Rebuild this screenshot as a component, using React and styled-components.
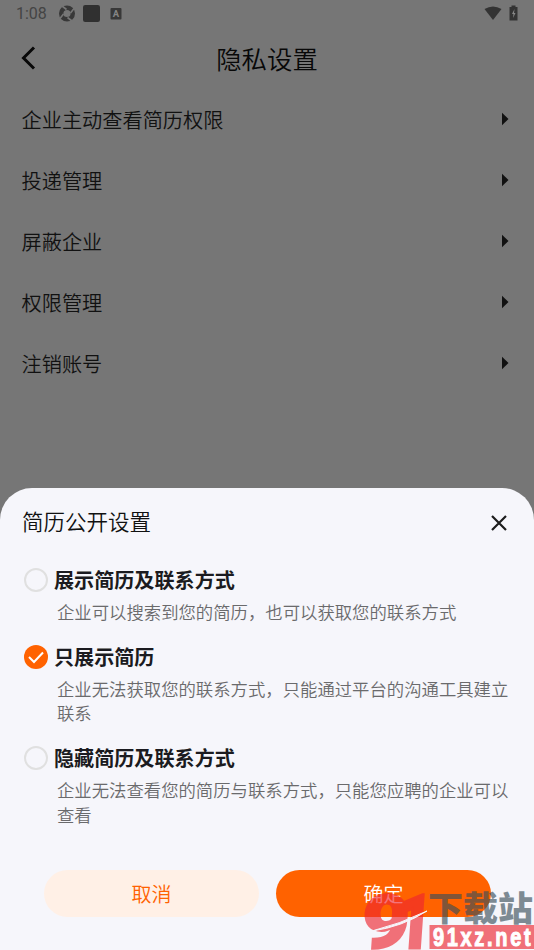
import styled, { createGlobalStyle } from 'styled-components';

const GlobalStyle = createGlobalStyle`
    * {
        box-sizing: border-box;
    }
    body {
        margin: 0;
        font-family: 'Noto Sans CJK SC', sans-serif;
        font-weight: 350;
    }
`;

const Screen = styled.div`
    width: 534px;
    height: 950px;
    display: flex;
    flex-direction: column;
    background: #767676;
    position: relative;
    overflow: hidden;
`;

const StatusBar = styled.div`
    height: 28px;
    flex: none;
    display: flex;
    justify-content: space-between;
    padding: 0 14px 0 16px;
    color: #444;
`;

const StatusGroup = styled.div`
    display: flex;
    align-items: center;
`;

const Clock = styled.span`
    font-family: Roboto, sans-serif;
    font-size: 16px;
    font-weight: 450;
    line-height: 28px;
    width: 43px;
`;

const NavBar = styled.header`
    height: 61px;
    flex: none;
    display: grid;
    grid-template-columns: 60px 1fr 60px;
    align-items: center;
    padding-bottom: 2px;
`;

const BackButton = styled.button`
    border: 0;
    background: none;
    padding: 1px 0 0 20px;
    display: flex;
`;

const PageTitle = styled.h1`
    margin: 0;
    font-size: 25.4px;
    font-weight: 350;
    line-height: 36px;
    text-align: center;
    color: #080808;
`;

const Menu = styled.ul`
    list-style: none;
    margin: 0;
    padding: 0;
    height: 399px;
    flex: none;
`;

const MenuItem = styled.li`
    height: 61px;
    display: flex;
    align-items: center;
    justify-content: space-between;
    padding: 0 25px 0 21.5px;
    font-size: 20.2px;
    color: #111;

    svg {
        margin-bottom: 2px;
    }
`;

const Sheet = styled.section`
    flex: 1;
    display: flex;
    flex-direction: column;
    background: #f6f6fb;
    border-radius: 32px 32px 0 0;
    padding: 14px 22px 0;
`;

const SheetHeader = styled.div`
    height: 36px;
    display: flex;
    align-items: center;
    justify-content: space-between;
    padding-right: 5px;
    margin-bottom: 24.6px;

    svg {
        margin-top: 5px;
    }
`;

const SheetTitle = styled.h2`
    margin: 0;
    font-size: 21.5px;
    font-weight: 350;
    color: #111;
`;

const Option = styled.div`
    display: grid;
    grid-template-columns: 32px 1fr;
    align-items: center;
    margin-bottom: 15.5px;
`;

const Radio = styled.span`
    width: 24px;
    height: 24px;
    margin-left: 2px;
    border-radius: 50%;
    border: ${p => p.$checked ? '0' : '2.5px solid #e0e0e0'};
    background: ${p => p.$checked ? '#ff6200' : 'transparent'};
    display: flex;
`;

const OptionTitle = styled.h3`
    margin: 0;
    font-size: 20.1px;
    line-height: 34px;
    font-weight: 700;
    color: #1b1b20;
`;

const OptionText = styled.p`
    grid-column: 1 / -1;
    margin: 3px 0 0 35px;
    width: 460px;
    font-size: 17.37px;
    line-height: 24.5px;
    color: #6a6a6c;
`;

const Actions = styled.div`
    display: flex;
    gap: 17px;
    padding: 27.6px 0 0 22px;
`;

const Button = styled.button`
    width: 215px;
    height: 47px;
    border: 0;
    border-radius: 24px;
    padding: 0 0 1px;
    font-family: inherit;
    font-weight: 350;
    font-size: 20px;
    color: ${p => p.$primary ? '#fff' : '#ff6200'};
    background: ${p => p.$primary ? '#ff6200' : '#fff0e6'};
`;

const Watermark = styled.svg`
    position: absolute;
    right: 0;
    bottom: 0;
`;

const menu = ['企业主动查看简历权限', '投递管理', '屏蔽企业', '权限管理', '注销账号'];

const options = [
    { title: '展示简历及联系方式', text: '企业可以搜索到您的简历，也可以获取您的联系方式' },
    { title: '只展示简历', text: '企业无法获取您的联系方式，只能通过平台的沟通工具建立联系', checked: true },
    { title: '隐藏简历及联系方式', text: '企业无法查看您的简历与联系方式，只能您应聘的企业可以查看' },
];

function StatusIcons() {
    return (
        <svg width="64" height="20" viewBox="0 0 64 20">
            <circle cx="8" cy="9.5" r="5.8" fill="none" stroke="#383838" strokeWidth="4.4" />
            <path d="M3 2l4.500 3.500M15 4.500l-3.500 4.500M13 17l-4.500-3.500M1 14.500l3.500-4.500" stroke="#767676" strokeWidth="1.6" />
            <rect x="24" y="1" width="17" height="17" rx="2.2" fill="#303030" />
            <rect x="51.5" y="4" width="11" height="11.5" rx="1" fill="#383838" />
            <text x="57" y="13.3" textAnchor="middle" fontFamily="Roboto" fontWeight="700" fontSize="9.5" fill="#858585">A</text>
        </svg>
    );
}

function BatteryIcons() {
    return (
        <svg width="36" height="18" viewBox="0 0 36 18">
            <path d="M0.5 4Q9 -1 17.5 4L9 15Z" fill="#333" />
            <path d="M25.5 2h2V.5h4V2h2v13.500h-8z" fill="#333" />
            <path d="M30.5 4l-2.500 5h1.500l-.500 4 2.500-5h-1.500z" fill="#888" />
        </svg>
    );
}

function SiteMark() {
    return (
        <Watermark width="170" height="62" viewBox="364 888 170 62">
            <g opacity="0.64">
                <g fill="#ee2630">
                    <g fontFamily="Roboto" fontWeight="900" fontSize="75" stroke="#ee2630">
                        <text transform="translate(360 948) skewX(-4)" strokeWidth="2" textLength="48" lengthAdjust="spacingAndGlyphs">9</text>
                        <text transform="translate(395 948) skewX(-4)" strokeWidth="3" textLength="35" lengthAdjust="spacingAndGlyphs">1</text>
                    </g>
                    <rect x="429.500" y="925" width="105" height="24" />
                </g>
                <text x="428" y="920.500" fontFamily="Noto Sans CJK SC" fontWeight="900" fontSize="34" textLength="105" lengthAdjust="spacingAndGlyphs" fill="#3a4e59">下载站</text>
            </g>
            <path d="M372 931Q400 924 427 911Q402 927 372 931Z" fill="#f6f6fb" stroke="#f6f6fb" strokeWidth="1" />
            <text transform="translate(433 946) scale(0.8 1)" fontFamily="Liberation Sans" fontWeight="700" fontSize="25" textLength="122" fill="#fff" stroke="#fff" strokeWidth="1">91xz.net</text>
        </Watermark>
    );
}

function App() {
    return (
        <Screen>
            <GlobalStyle />
            <StatusBar>
                <StatusGroup>
                    <Clock>1:08</Clock>
                    <StatusIcons />
                </StatusGroup>
                <StatusGroup>
                    <BatteryIcons />
                </StatusGroup>
            </StatusBar>
            <NavBar>
                <BackButton>
                    <svg width="16" height="24" viewBox="0 0 16 24">
                        <path d="M14 1.500L3.500 12L14 22.500" fill="none" stroke="#080808" strokeWidth="3" />
                    </svg>
                </BackButton>
                <PageTitle>隐私设置</PageTitle>
            </NavBar>
            <Menu>
                {menu.map(item => (
                    <MenuItem key={item}>
                        {item}
                        <svg width="7" height="14" viewBox="0 0 7 14">
                            <path d="M0 .8v12.500L6.500 7z" fill="#111" />
                        </svg>
                    </MenuItem>
                ))}
            </Menu>
            <Sheet>
                <SheetHeader>
                    <SheetTitle>简历公开设置</SheetTitle>
                    <svg width="16" height="16" viewBox="0 0 16 16">
                        <path d="M1 1l14 14M15 1L1 15" stroke="#1c1c1c" strokeWidth="2.200" />
                    </svg>
                </SheetHeader>
                {options.map(option => (
                    <Option key={option.title}>
                        <Radio $checked={option.checked}>
                            {option.checked && (
                                <svg width="24" height="24" viewBox="0 0 24 24">
                                    <path d="M5 12l5 5 9-9.500" fill="none" stroke="#fff" strokeWidth="2" />
                                </svg>
                            )}
                        </Radio>
                        <OptionTitle>{option.title}</OptionTitle>
                        <OptionText>{option.text}</OptionText>
                    </Option>
                ))}
                <Actions>
                    <Button>取消</Button>
                    <Button $primary>确定</Button>
                </Actions>
            </Sheet>
            <SiteMark />
        </Screen>
    );
}

export default App;
